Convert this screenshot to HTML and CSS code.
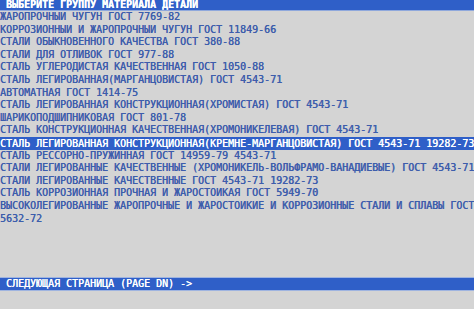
FILE: index.html
```html
<!DOCTYPE html>
<html lang="ru">
<head>
<meta charset="utf-8">
<link rel="stylesheet" href="styles.css">
</head>
<body>
<div class="screen">
  <div class="title"> ВЫБЕРИТЕ ГРУППУ МАТЕРИАЛА ДЕТАЛИ</div>
  <ul class="list">
    <li>ЖАРОПРОЧНЫЙ ЧУГУН ГОСТ 7769-82</li>
    <li>КОРРОЗИОННЫЙ И ЖАРОПРОЧНЫЙ ЧУГУН ГОСТ 11849-66</li>
    <li>СТАЛИ ОБЫКНОВЕННОГО КАЧЕСТВА ГОСТ 380-88</li>
    <li>СТАЛИ ДЛЯ ОТЛИВОК ГОСТ 977-88</li>
    <li>СТАЛЬ УГЛЕРОДИСТАЯ КАЧЕСТВЕННАЯ ГОСТ 1050-88</li>
    <li>СТАЛЬ ЛЕГИРОВАННАЯ(МАРГАНЦОВИСТАЯ) ГОСТ 4543-71</li>
    <li>АВТОМАТНАЯ ГОСТ 1414-75</li>
    <li>СТАЛЬ ЛЕГИРОВАННАЯ КОНСТРУКЦИОННАЯ(ХРОМИСТАЯ) ГОСТ 4543-71</li>
    <li>ШАРИКОПОДШИПНИКОВАЯ ГОСТ 801-78</li>
    <li>СТАЛЬ КОНСТРУКЦИОННАЯ КАЧЕСТВЕННАЯ(ХРОМОНИКЕЛЕВАЯ) ГОСТ 4543-71</li>
    <li class="selected">СТАЛЬ ЛЕГИРОВАННАЯ КОНСТРУКЦИОННАЯ(КРЕМНЕ-МАРГАНЦОВИСТАЯ) ГОСТ 4543-71 19282-73</li>
    <li>СТАЛЬ РЕССОРНО-ПРУЖИННАЯ ГОСТ 14959-79 4543-71</li>
    <li>СТАЛИ ЛЕГИРОВАННЫЕ КАЧЕСТВЕННЫЕ (ХРОМОНИКЕЛЬ-ВОЛЬФРАМО-ВАНАДИЕВЫЕ) ГОСТ 4543-71</li>
    <li>СТАЛИ ЛЕГИРОВАННЫЕ КАЧЕСТВЕННЫЕ ГОСТ 4543-71 19282-73</li>
    <li>СТАЛЬ КОРРОЗИОННАЯ ПРОЧНАЯ И ЖАРОСТОЙКАЯ ГОСТ 5949-70</li>
    <li>ВЫСОКОЛЕГИРОВАННЫЕ ЖАРОПРОЧНЫЕ И ЖАРОСТОЙКИЕ И КОРРОЗИОННЫЕ СТАЛИ И СПЛАВЫ ГОСТ</li>
    <li>5632-72</li>
  </ul>
  <div class="footer"> СЛЕДУЮЩАЯ СТРАНИЦА (PAGE DN) -&gt;</div>
</div>
</body>
</html>
```

FILE: styles.css
```css
html, body {
  margin: 0;
  padding: 0;
  background: #d4d4d4;
}
.screen {
  width: 474px;
  height: 309px;
  overflow: hidden;
  display: flex;
  flex-direction: column;
  font-family: "DejaVu Sans Mono", "Liberation Mono", monospace;
  font-size: 9.97px;
  color: #3d5dac;
  text-shadow: 0.3px 0 0 currentColor;
}
.title {
  height: 10px;
  line-height: 10px;
  background: #2f5fc8;
  border-bottom: 1px solid #8fa8dc;
  color: #ffffff;
  font-weight: bold;
  white-space: pre;
}
.list {
  list-style: none;
  margin: 0;
  padding: 0;
}
.list li {
  height: 12.6px;
  line-height: 12.6px;
  white-space: pre;
  overflow: hidden;
}
.list li.selected {
  height: 11.6px;
  padding-top: 1px;
  line-height: 11.6px;
  background: #2f5fc8;
  color: #ffffff;
}
.footer {
  margin-top: auto;
  margin-bottom: 18px;
  height: 12px;
  line-height: 12px;
  background: #2f5fc8;
  border-top: 1px solid #9fb4e0;
  border-bottom: 1px solid #9fb4e0;
  color: #ffffff;
  white-space: pre;
}
```
